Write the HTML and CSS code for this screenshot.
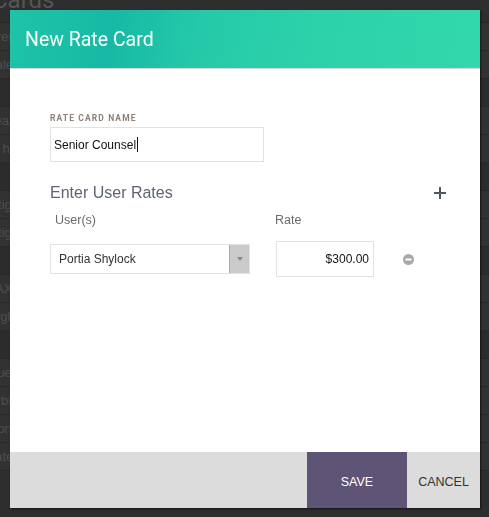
FILE: index.html
```html
<!DOCTYPE html>
<html lang="en">
<head>
    <meta charset="UTF-8">
    <meta name="viewport" content="width=device-width, initial-scale=1.0">
    <title>Rate Cards</title>
    <link rel="stylesheet" href="styles.css">
</head>
<body>
    <div class="page">
        <h1 class="page-title">Cards</h1>
        <ul class="card-list">
            <li>Premium</li>
            <li>Vale</li>
            <li class="group"></li>
            <li>Team</li>
            <li>In house</li>
            <li class="group"></li>
            <li>Litigation</li>
            <li>Litigation</li>
            <li class="group"></li>
            <li>TAX</li>
            <li>High</li>
            <li class="group"></li>
            <li>Due diligence</li>
            <li>Arbitration</li>
            <li>Don't</li>
            <li>Late</li>
        </ul>
    </div>

    <div class="overlay">
        <div class="modal">
            <header class="modal-header">
                <h2>New Rate Card</h2>
            </header>

            <div class="modal-body">
                <label class="field-label">RATE CARD NAME</label>
                <div class="text-field name-field">Senior Counsel<span class="caret"></span></div>

                <div class="rates-head">
                    <h3>Enter User Rates</h3>
                    <svg class="add-icon" width="12" height="12" viewBox="0 0 12 12">
                        <path d="M6 0v12M0 6h12" stroke="#4d5661" stroke-width="2"/>
                    </svg>
                </div>

                <div class="rates-cols">
                    <span class="col-user">User(s)</span>
                    <span class="col-rate">Rate</span>
                </div>

                <div class="rate-row">
                    <div class="select">
                        <span class="select-value">Portia Shylock</span>
                        <span class="select-arrow"></span>
                    </div>
                    <div class="text-field rate-field">$300.00</div>
                    <svg class="remove-icon" width="11" height="11" viewBox="0 0 11 11">
                        <circle cx="5.5" cy="5.5" r="5.5" fill="#a9a9a9"/>
                        <rect x="2.5" y="4.5" width="6" height="2" fill="#fff"/>
                    </svg>
                </div>
            </div>

            <footer class="modal-footer">
                <button class="btn btn-save">SAVE</button>
                <button class="btn btn-cancel">CANCEL</button>
            </footer>
        </div>
    </div>
</body>
</html>
```
FILE: styles.css
```css
*{box-sizing:border-box;margin:0;padding:0}
body{font-family:"Liberation Sans",Arial,sans-serif;background:#2e2e2e;color:#333;overflow:hidden;height:517px}

/* page behind the dialog */
.page{color:#4e4e4e}
.page-title{font-family:Roboto,sans-serif;font-weight:400;font-size:24px;line-height:0;height:22px;text-indent:-8px;color:#555}
.card-list{list-style:none;border-top:1px solid #262626}
.card-list li{height:28px;line-height:28px;font-size:13px;text-indent:-12px;border-bottom:1px solid #282828;background:#323232}
.card-list li.group{background:#2c2c2c}

/* dialog */
.overlay{position:fixed;top:0;left:0;right:0;bottom:0;padding:10px 9px 9px 10px}
.modal{width:470px;height:498px;background:#fff;display:flex;flex-direction:column;box-shadow:1px 1px 2px rgba(0,0,0,0.6)}
.modal-header{height:59px;flex:none;padding:0 15px;display:flex;align-items:center;border-bottom:1px solid #d8d8d8;background:linear-gradient(100deg,#1fc3a8 0%,#17b9a5 22%,#25c9a9 40%,#2dd2aa 65%,#33d7ab 100%)}
.modal-header h2{font-family:Roboto,sans-serif;font-weight:400;font-size:19.5px;color:#f4fffb}

.modal-body{flex:1;padding:44px 40px 0}
.field-label{display:block;font-family:Roboto,sans-serif;font-weight:700;font-size:8.5px;line-height:10px;letter-spacing:1.1px;color:#8d8179}
.text-field{border:1px solid #e2e2e2;font-size:12px;color:#111;background:#fff}
.name-field{width:214px;height:35px;margin-top:4px;padding:0 3px;display:flex;align-items:center}
.caret{display:inline-block;width:1px;height:15px;background:#111;margin-left:1px}

.rates-head{display:flex;justify-content:space-between;align-items:center;margin-top:21px;margin-right:-6px}
.rates-head h3{font-weight:400;font-size:16px;line-height:20px;color:#5d6570}
.rates-cols{display:flex;margin-top:7px;font-size:12.5px;color:#6b6b6b;line-height:20px}
.col-user{width:225px;padding-left:5px}
.rate-row{display:flex;align-items:center;margin-top:11px}
.select{width:200px;height:30px;border:1px solid #e2e2e2;display:flex;align-items:center}
.select-value{flex:1;padding-left:8px;font-size:12px;color:#333}
.select-arrow{width:20px;height:28px;background:#cbcbcb;border-left:1px solid #a8a8a8;position:relative}
.select-arrow::after{content:"";position:absolute;left:7px;top:12px;border-left:3px solid transparent;border-right:3px solid transparent;border-top:4px solid #8a8a8a}
.rate-field{width:98px;height:36px;margin-left:26px;display:flex;align-items:center;justify-content:flex-end;padding-right:4px}
.remove-icon{margin-left:29px}

.modal-footer{height:56px;flex:none;background:#dcdcdc;display:flex;justify-content:flex-end}
.btn{border:none;background:none;font-family:"Liberation Sans",Arial,sans-serif;font-size:12.5px;padding-top:3px;cursor:pointer}
.btn-save{width:100px;background:#5e5475;color:#fff}
.btn-cancel{width:73px;color:#333}
```
